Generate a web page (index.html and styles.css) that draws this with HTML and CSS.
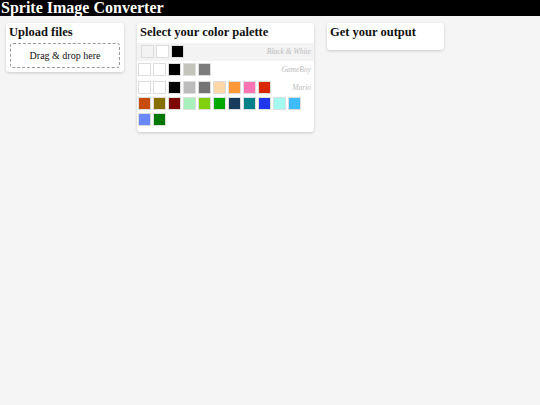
FILE: index.html
```html
<!DOCTYPE html>
<html>
<head>
<meta charset="utf-8">
<link rel="stylesheet" href="styles.css">
</head>
<body>
<header class="topbar"><h1 class="title">Sprite Image Converter</h1></header>
<main class="panels">
  <section class="card card-upload">
    <h2 class="card-title">Upload files</h2>
    <div class="dropzone">Drag &amp; drop here</div>
  </section>
  <section class="card card-palette">
    <h2 class="card-title">Select your color palette</h2>
    <div class="palette selected">
      <span class="palette-name">Black &amp; White</span>
      <span class="sw" style="background:#f3f3f3"></span><span class="sw" style="background:#ffffff"></span><span class="sw" style="background:#000000"></span>
    </div>
    <div class="palette">
      <span class="palette-name">GameBoy</span>
      <span class="sw" style="background:#ffffff"></span><span class="sw" style="background:#ffffff"></span><span class="sw" style="background:#000000"></span><span class="sw" style="background:#c4c4bc"></span><span class="sw" style="background:#7c7c7c"></span>
    </div>
    <div class="palette">
      <span class="palette-name">Mario</span>
      <span class="sw" style="background:#ffffff"></span><span class="sw" style="background:#ffffff"></span><span class="sw" style="background:#000000"></span><span class="sw" style="background:#bcbcbc"></span><span class="sw" style="background:#747474"></span><span class="sw" style="background:#fcd8a8"></span><span class="sw" style="background:#fc9838"></span><span class="sw" style="background:#fc74b4"></span><span class="sw" style="background:#d82800"></span><span class="sw" style="background:#c84c0c"></span><span class="sw" style="background:#887000"></span><span class="sw" style="background:#7c0800"></span><span class="sw" style="background:#a8f0bc"></span><span class="sw" style="background:#80d010"></span><span class="sw" style="background:#00a800"></span><span class="sw" style="background:#183c5c"></span><span class="sw" style="background:#008088"></span><span class="sw" style="background:#2038ec"></span><span class="sw" style="background:#a4fcf0"></span><span class="sw" style="background:#3cbcfc"></span><span class="sw" style="background:#6888fc"></span><span class="sw" style="background:#007800"></span>
    </div>
  </section>
  <section class="card card-output">
    <h2 class="card-title">Get your output</h2>
  </section>
</main>
</body>
</html>
```
FILE: styles.css
```css
html, body {
  margin: 0;
  padding: 0;
  background: #f5f5f5;
  font-family: "Liberation Serif", "DejaVu Serif", serif;
  color: #111;
}
.topbar {
  background: #000;
  height: 16px;
}
.title {
  margin: 0;
  padding-left: 1px;
  color: #fff;
  font-size: 16px;
  line-height: 16px;
  font-weight: bold;
  white-space: nowrap;
}
.panels {
  display: flex;
  align-items: flex-start;
  gap: 13px;
  padding: 7px 6px;
}
.card {
  background: #fff;
  border-radius: 3px;
  box-shadow: 0 1px 3px rgba(0,0,0,0.18);
  padding: 2px 3px 4px 3px;
  box-sizing: border-box;
}
.card-upload { width: 118px; height: 49px; }
.card-palette { width: 177px; padding: 2px 3px 3px 1px; }
.card-palette .card-title { margin-left: 2px; }
.card-output { width: 117px; height: 27px; }
.card-title {
  margin: 0;
  font-size: 12.5px;
  line-height: 14px;
  font-weight: bold;
}
.dropzone {
  margin: 4px 1px 0 1px;
  height: 25px;
  border: 1px dashed #999;
  border-radius: 3px;
  display: flex;
  align-items: center;
  justify-content: center;
  font-size: 10px;
  box-sizing: border-box;
}
.palette {
  padding-top: 2px;
}
.palette::after {
  content: "";
  display: block;
  clear: both;
}
.palette.selected {
  background: #f3f3f3;
  margin: 4px -3px 0 -1px;
  padding: 2px 3px 0 4px;
}
.palette-name {
  float: right;
  margin: 0 0 3px 10px;
  font-size: 7.5px;
  font-style: italic;
  color: #bbb;
  line-height: 13px;
}
.sw {
  float: left;
  width: 13px;
  height: 13px;
  margin: 0 2px 3px 0;
  box-sizing: border-box;
  border: 1px solid #ddd;
}
```
